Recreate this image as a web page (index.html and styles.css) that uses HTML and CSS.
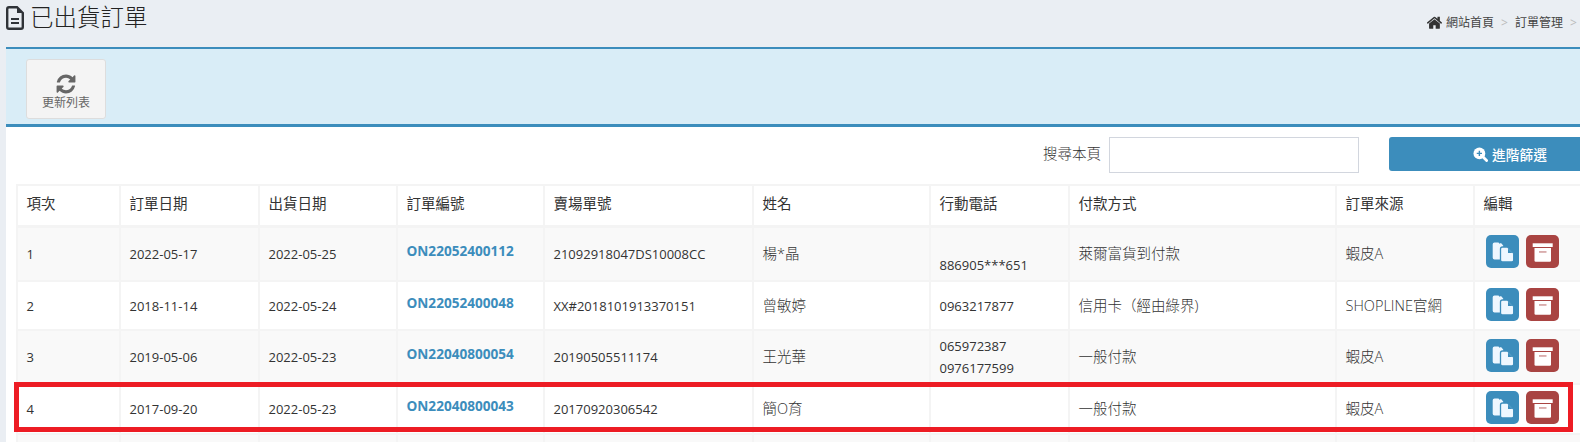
FILE: index.html
```html
<!DOCTYPE html>
<html lang="zh-Hant">
<head>
<meta charset="utf-8">
<title>已出貨訂單</title>
<link rel="stylesheet" href="styles.css">
</head>
<body>
<header class="top">
  <h1 class="title">
    <svg class="title-icon" viewBox="0 0 18 24"><path d="M3 1.200h8l5.800 5.800v14a1.800 1.800 0 0 1-1.800 1.800H3A1.800 1.800 0 0 1 1.200 21V3A1.800 1.800 0 0 1 3 1.200z" fill="none" stroke="#2f3338" stroke-width="2.400"/><path d="M11 1l6 6h-6z" fill="#2f3338"/><path d="M5 13h8M5 17h8" stroke="#2f3338" stroke-width="2"/></svg>
    <span>已出貨訂單</span>
  </h1>
  <nav class="crumbs">
    <svg class="home" viewBox="100 200 1600 1340"><path fill="#333" d="M1472 992v480q0 26-19 45t-45 19h-384v-384h-256v384h-384q-26 0-45-19t-19-45v-480q0-1 .5-3t.5-3l575-474 575 474q1 2 1 6zm223-69l-62 74q-8 9-21 11h-3q-13 0-21-7l-692-577-692 577q-12 8-24 7-13-2-21-11l-62-74q-8-10-7-23.500t11-21.500l719-599q32-26 76-26t76 26l244 204v-195q0-14 9-23t23-9h192q14 0 23 9t9 23v408l219 182q10 8 11 21.500t-7 23.500z"/></svg>
    <span>網站首頁</span><i class="sep">&gt;</i><span>訂單管理</span><i class="sep">&gt;</i>
  </nav>
</header>

<main class="panel">
  <div class="toolbar">
    <button class="tool">
      <svg class="tool-icon" viewBox="0 0 1792 1792"><path fill="#666" d="M1639 1056q0 5-1 7-64 268-268 434.500t-478 166.500q-146 0-282.500-55t-243.500-157l-129 129q-19 19-45 19t-45-19-19-45v-448q0-26 19-45t45-19h448q26 0 45 19t19 45-19 45l-137 137q71 66 161 102t187 36q134 0 250-65t186-179q11-17 53-117 8-23 30-23h192q13 0 22.500 9.500t9.500 22.500zm25-800v448q0 26-19 45t-45 19h-448q-26 0-45-19t-19-45 19-45l138-138q-148-137-349-137-134 0-250 65t-186 179q-11 17-53 117-8 23-30 23h-199q-13 0-22.500-9.500t-9.500-22.500v-7q65-268 270-434.500t480-166.500q146 0 284 55.500t245 156.500l130-129q19-19 45-19t45 19 19 45z"/></svg>
      <span>更新列表</span>
    </button>
  </div>

  <div class="search">
    <label class="search-label" for="q">搜尋本頁</label>
    <input class="search-input" id="q" type="text">
    <button class="filter">
      <svg class="filter-icon" viewBox="0 0 16 16"><circle cx="6.800" cy="6.800" r="6.300" fill="#fff"/><path d="M10.500 10.500l4 4" stroke="#fff" stroke-width="3" stroke-linecap="round"/><path d="M6.800 4v5.600M4 6.800h5.600" stroke="#3c8dbc" stroke-width="1.500"/></svg>
      <span>進階篩選</span>
    </button>
  </div>

  <table class="orders">
    <colgroup>
      <col class="c1"><col class="c2"><col class="c3"><col class="c4"><col class="c5"><col class="c6"><col class="c7"><col class="c8"><col class="c9"><col class="c10">
    </colgroup>
    <thead>
      <tr class="rh"><th>項次</th><th>訂單日期</th><th>出貨日期</th><th>訂單編號</th><th>賣場單號</th><th>姓名</th><th>行動電話</th><th>付款方式</th><th>訂單來源</th><th>編輯</th></tr>
    </thead>
    <tbody>
      <tr class="r1">
        <td>1</td><td>2022-05-17</td><td>2022-05-25</td><td class="order"><a href="#">ON22052400112</a></td><td>21092918047DS10008CC</td>
        <td class="zh">楊*晶</td><td><br>886905***651</td><td class="zh">萊爾富貨到付款</td><td class="zh">蝦皮A</td>
        <td class="ops"><div class="op-row"><a class="op copy" href="#"><svg viewBox="0 0 33 33"><use href="#i-copy"/></svg></a><a class="op arch" href="#"><svg viewBox="0 0 33 33"><use href="#i-arch"/></svg></a></div></td>
      </tr>
      <tr class="r2">
        <td>2</td><td>2018-11-14</td><td>2022-05-24</td><td class="order"><a href="#">ON22052400048</a></td><td>XX#2018101913370151</td>
        <td class="zh">曾敏婷</td><td>0963217877</td><td class="zh">信用卡（經由綠界)</td><td class="zh">SHOPLINE官網</td>
        <td class="ops"><div class="op-row"><a class="op copy" href="#"><svg viewBox="0 0 33 33"><use href="#i-copy"/></svg></a><a class="op arch" href="#"><svg viewBox="0 0 33 33"><use href="#i-arch"/></svg></a></div></td>
      </tr>
      <tr class="r3">
        <td>3</td><td>2019-05-06</td><td>2022-05-23</td><td class="order"><a href="#">ON22040800054</a></td><td>20190505511174</td>
        <td class="zh">王光華</td><td>065972387<br>0976177599</td><td class="zh">一般付款</td><td class="zh">蝦皮A</td>
        <td class="ops"><div class="op-row"><a class="op copy" href="#"><svg viewBox="0 0 33 33"><use href="#i-copy"/></svg></a><a class="op arch" href="#"><svg viewBox="0 0 33 33"><use href="#i-arch"/></svg></a></div></td>
      </tr>
      <tr class="r4">
        <td>4</td><td>2017-09-20</td><td>2022-05-23</td><td class="order"><a href="#">ON22040800043</a></td><td>20170920306542</td>
        <td class="zh">簡O育</td><td></td><td class="zh">一般付款</td><td class="zh">蝦皮A</td>
        <td class="ops"><div class="op-row"><a class="op copy" href="#"><svg viewBox="0 0 33 33"><use href="#i-copy"/></svg></a><a class="op arch" href="#"><svg viewBox="0 0 33 33"><use href="#i-arch"/></svg></a></div></td>
      </tr>
      <tr class="r5"><td></td><td></td><td></td><td></td><td></td><td></td><td></td><td></td><td></td><td></td></tr>
    </tbody>
  </table>
</main>

<div class="mark"></div>

<svg class="defs" width="0" height="0">
  <symbol id="i-copy" viewBox="0 0 33 33">
    <path fill="#eef7ff" d="M8.500 7.500h4l1 1.300L15 8l2.200 2.500v14H8.500q-1.800 0-1.800-1.800V9.300q0-1.800 1.800-1.800z"/>
    <path fill="#eef7ff" stroke="#3c8dbc" stroke-width="1.300" d="M16.500 12h5l6.200 6.200v6.800q0 2-2 2h-9.200q-2 0-2-2V14q0-2 2-2z"/>
    <path fill="#3c8dbc" d="M22 13.500v4.500h4.500z"/>
  </symbol>
  <symbol id="i-arch" viewBox="0 0 33 33">
    <rect x="6.700" y="8.300" width="20" height="3.700" fill="#fff"/>
    <path fill="#fff" d="M8.500 13h16.500v12.500q0 1.200-1.200 1.200H9.700q-1.200 0-1.200-1.200z"/>
    <rect x="13" y="16.300" width="7.500" height="1.300" fill="#c98a8a"/>
  </symbol>
</svg>
</body>
</html>
```
FILE: styles.css
```css
* { box-sizing: border-box; }
html, body { margin: 0; height: 442px; overflow: hidden; }
body {
  background: #eaeef3;
  color: #333;
  font-family: "Open Sans", "Noto Sans CJK TC", sans-serif;
  font-size: 13px;
  position: relative;
  width: 1580px;
}
.top { display: flex; height: 47px; width: 1700px; }
.title {
  display: flex;
  align-items: flex-start;
  gap: 6px;
  width: 1427px;
  flex: none;
  margin: 0;
  padding: 6px 0 0 6px;
  font-size: 23.500px;
  font-weight: 300;
  line-height: 23px;
  color: #222;
}
.title-icon { width: 18px; height: 24px; flex: none; }
.crumbs {
  display: flex;
  align-items: center;
  height: 14px;
  margin-top: 15px;
  font-size: 12px;
  white-space: nowrap;
  color: #444;
}
.home { width: 15px; height: 13px; margin-right: 4px; }
.sep { font-style: normal; color: #bbb; margin: 0 7px; }

.panel { background: #fff; margin-left: 6px; width: 1660px; height: 395px; }
.toolbar {
  background: #d9edf7;
  border-top: 2px solid #3c8dbc;
  border-bottom: 3px solid #3c8dbc;
  height: 80px;
  padding: 10px 20px;
}
.tool {
  display: flex;
  flex-direction: column;
  align-items: center;
  width: 80px;
  height: 60px;
  padding: 13px 0 0;
  background: #f4f4f4;
  border: 1px solid #ddd;
  border-radius: 3px;
  color: #666;
  font: 12px/15px "Open Sans", "Noto Sans CJK TC", sans-serif;
}
.tool-icon { width: 22px; height: 22px; flex: none; }

.search {
  display: flex;
  align-items: flex-start;
  height: 57px;
  padding-top: 10px;
  padding-left: 1037px;
}
.search-label { width: 66px; font-size: 14.500px; font-weight: 300; line-height: 34px; }
.search-input {
  width: 250px;
  height: 36px;
  border: 1px solid #d2d6de;
  background: #fff;
  margin-right: 30px;
}
.filter {
  display: flex;
  align-items: center;
  justify-content: center;
  gap: 4px;
  width: 236px;
  height: 34px;
  padding: 0 0 0 6px;
  background: #3c8dbc;
  border: 0;
  border-radius: 3px;
  color: #fff;
  font: 500 13.700px "Open Sans", "Noto Sans CJK TC", sans-serif;
}
.filter-icon { width: 15px; height: 15px; flex: none; }

.orders {
  border-collapse: collapse;
  table-layout: fixed;
  width: 1599px;
  margin-left: 10px;
}
.c1 { width: 103px; }
.c2 { width: 139px; }
.c3 { width: 138px; }
.c4 { width: 147px; }
.c5 { width: 209px; }
.c6 { width: 177px; }
.c7 { width: 139px; }
.c8 { width: 267px; }
.c9 { width: 138px; }
.c10 { width: 142px; }
.orders th, .orders td {
  border: 2px solid #f4f4f4;
  padding: 0 8.500px;
  text-align: left;
  line-height: 22px;
  vertical-align: middle;
  white-space: nowrap;
}
.orders th {
  font-size: 14.500px;
  font-weight: 400;
  border-bottom-width: 3px;
  padding-bottom: 2px;
}
.rh th { height: 41px; }
tbody tr:nth-child(odd) { background: #f9f9f9; }
.r1 td { height: 55px; }
.r2 td { height: 49px; }
.r3 td { height: 54px; }
.r4 td { height: 50px; background: #fff; }
.r5 td { height: 50px; }
.orders .zh { font-size: 14.500px; font-weight: 300; color: #333; }
.orders .order { padding-bottom: 6px; }
.order a { color: #3c8dbc; font-weight: 700; font-size: 13.600px; text-decoration: none; }
.orders .ops { padding-bottom: 3px; }
.r1 .ops .op-row { margin-bottom: 1px; }
.op-row { display: flex; gap: 7px; padding-left: 2px; }
.op { display: block; width: 33px; height: 33px; border-radius: 5px; }
.op svg { display: block; width: 33px; height: 33px; }
.copy { background: #3c8dbc; }
.arch { background: #a94442; }

.mark {
  position: absolute;
  left: 14px;
  top: 382px;
  width: 1559px;
  height: 50px;
  border: 5px solid #ed1c24;
  pointer-events: none;
}
.defs { position: absolute; }
```
